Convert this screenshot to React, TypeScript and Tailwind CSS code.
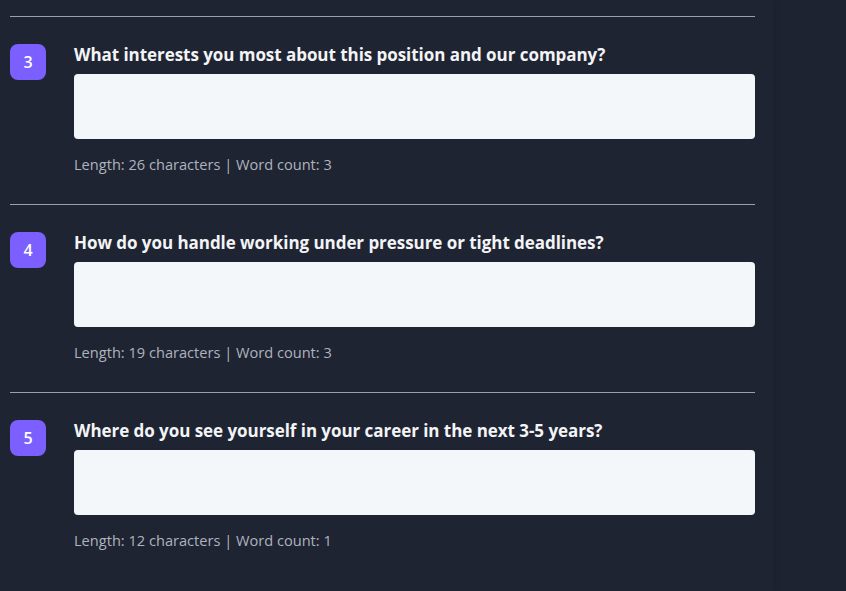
const QUESTIONS = [
  { n: 3, text: "What interests you most about this position and our company?", len: 26, words: 3 },
  { n: 4, text: "How do you handle working under pressure or tight deadlines?", len: 19, words: 3 },
  { n: 5, text: "Where do you see yourself in your career in the next 3-5 years?", len: 12, words: 1 },
];

export default function App() {
  return (
    <div
      className="min-h-screen w-full bg-[#1e2331] overflow-hidden"
      style={{ fontFamily: '"Open Sans", "Noto Sans", sans-serif' }}
    >
      <div className="w-[773px] min-h-screen bg-[#1f2433] shadow-[4px_0_6px_rgba(0,0,0,0.06)] pl-[10px] pt-4">
        <div className="w-[745px]">
          {QUESTIONS.map((q) => (
            <section key={q.n} className="border-t border-[#9aa1ae] pt-[26px] pb-[30px]">
              <div className="flex gap-7">
                {/* number badge */}
                <div className="mt-[1px] flex h-9 w-9 shrink-0 items-center justify-center rounded-lg bg-[#7b5fff] text-base font-semibold text-white">
                  {q.n}
                </div>
                <div className="flex-1 min-w-0">
                  <h3 className="text-[17px] leading-6 font-bold tracking-[-0.05px] text-[#f3f4f6]">{q.text}</h3>
                  <textarea
                    className="mt-[7px] block h-[65px] w-full resize-none rounded bg-[#f4f7fa] outline-none"
                    defaultValue=""
                  />
                  <p className="mt-[15px] text-[14.6px] leading-5 text-[#aeb3bd]">
                    Length: {q.len} characters | Word count: {q.words}
                  </p>
                </div>
              </div>
            </section>
          ))}
        </div>
      </div>
    </div>
  );
}
